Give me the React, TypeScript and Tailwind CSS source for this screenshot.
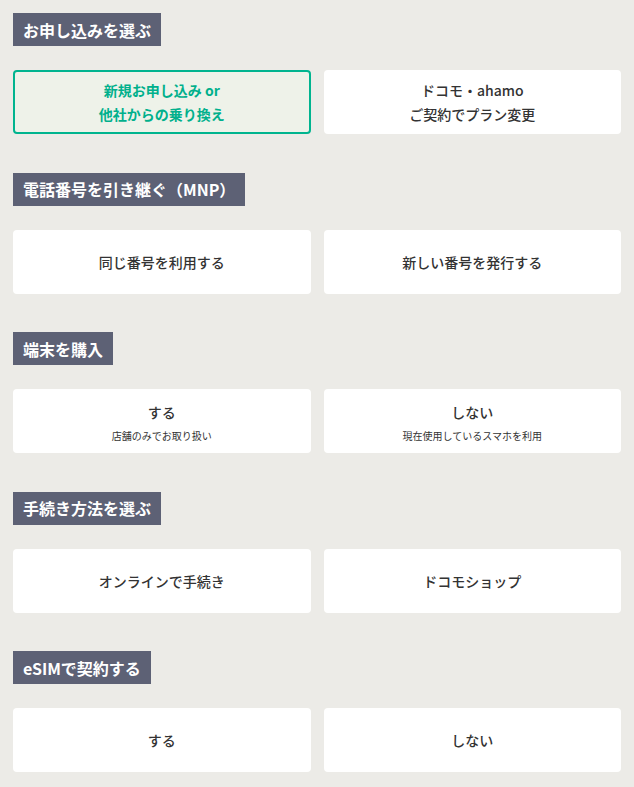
import React from 'react';

type Option = { label: React.ReactNode; sub?: string; selected?: boolean };
type Section = { title: string; options: Option[] };

const sections: Section[] = [
  {
    title: 'お申し込みを選ぶ',
    options: [
      { label: <>新規お申し込み or<br />他社からの乗り換え</>, selected: true },
      { label: <>ドコモ・ahamo<br />ご契約でプラン変更</> },
    ],
  },
  {
    title: '電話番号を引き継ぐ（MNP）',
    options: [{ label: '同じ番号を利用する' }, { label: '新しい番号を発行する' }],
  },
  {
    title: '端末を購入',
    options: [
      { label: 'する', sub: '店舗のみでお取り扱い' },
      { label: 'しない', sub: '現在使用しているスマホを利用' },
    ],
  },
  {
    title: '手続き方法を選ぶ',
    options: [{ label: 'オンラインで手続き' }, { label: 'ドコモショップ' }],
  },
  {
    title: 'eSIMで契約する',
    options: [{ label: 'する' }, { label: 'しない' }],
  },
];

const OptionCard: React.FC<{ option: Option }> = ({ option }) => {
  const base =
    'h-[64px] rounded-[4px] flex flex-col items-center justify-center text-center text-[14px] leading-[24px]';
  if (option.selected) {
    return (
      <button className={`${base} bg-[#eef2e9] border-2 border-[#00b48f] text-[#00b08c] font-bold`}>
        {option.label}
      </button>
    );
  }
  return (
    <button className={`${base} bg-white text-[#333333] font-medium`}>
      <span>{option.label}</span>
      {option.sub && <span className="text-[10px] leading-[14px] mt-[5px] font-normal">{option.sub}</span>}
    </button>
  );
};

const App: React.FC = () => {
  return (
    <div
      className="min-h-screen bg-[#ecebe7] px-[13px] pt-[13px] pb-[17px]"
      style={{ fontFamily: '"Noto Sans CJK JP", "Noto Sans", sans-serif' }}
    >
      <div className="flex flex-col gap-[38.5px]">
        {sections.map((section) => (
          <div key={section.title}>
            <div className="inline-flex h-[33px] items-center bg-[#5d6175] px-[10px] text-white text-[16px] font-bold">
              {section.title}
            </div>
            <div className="grid grid-cols-2 gap-[13px] mt-[24px]">
              {section.options.map((option, i) => (
                <OptionCard key={i} option={option} />
              ))}
            </div>
          </div>
        ))}
      </div>
    </div>
  );
};

export default App;
